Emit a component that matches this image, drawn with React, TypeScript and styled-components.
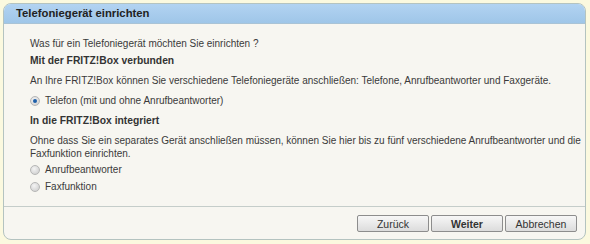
import React, { useState } from 'react';
import styled, { createGlobalStyle } from 'styled-components';

const GlobalStyle = createGlobalStyle`
  html, body {
    margin: 0;
    padding: 0;
    background: #fbf9df;
  }
  body {
    font-family: "Liberation Sans", Arial, sans-serif;
    font-size: 10px;
    color: #3a3a3a;
  }
`;

const Page = styled.div`
  padding: 3px 4px 4px 3px;
`;

const Panel = styled.div`
  border: 1px solid #b4c3c0;
  border-radius: 8px;
  background: #f7f6f1;
  overflow: hidden;
  display: flex;
  flex-direction: column;
  height: 237px;
  box-sizing: border-box;
`;

const Header = styled.div`
  height: 19px;
  line-height: 19px;
  padding-left: 12px;
  background: linear-gradient(#b2d3f2, #9fc6e8);
  border-bottom: 1px solid #a9c3d6;
  font-size: 11.3px;
  font-weight: bold;
  color: #222;
`;

const Body = styled.div`
  flex: 1;
  padding: 13px 4px 0 26px;
`;

const Paragraph = styled.p<{ gap?: number }>`
  margin: 0 0 ${p => p.gap ?? 7}px 0;
  line-height: 13px;
`;

const Heading = styled.h3<{ gap?: number }>`
  margin: 0 0 ${p => p.gap ?? 7}px 0;
  font-size: 10.3px;
  font-weight: bold;
  line-height: 13px;
  color: #333;
`;

const RadioRow = styled.label<{ gap?: number }>`
  display: flex;
  align-items: center;
  gap: 5px;
  height: 13px;
  margin: 0 0 ${p => p.gap ?? 7}px 0;
  cursor: pointer;
`;

const RadioDot = styled.span<{ checked?: boolean }>`
  width: 10px;
  height: 10px;
  border-radius: 50%;
  box-sizing: border-box;
  border: 1px solid #b6b6b6;
  background: radial-gradient(circle at 40% 35%, #f4f4f4, #c9c9c9);
  display: flex;
  align-items: center;
  justify-content: center;
  &::after {
    content: '';
    display: ${p => (p.checked ? 'block' : 'none')};
    width: 4px;
    height: 4px;
    border-radius: 50%;
    background: #1d5fa8;
  }
`;

const Footer = styled.div`
  border-top: 1px solid #c5cdca;
  display: flex;
  justify-content: flex-end;
  gap: 2px;
  padding: 8px 8px 7px 0;
`;

const Button = styled.button<{ primary?: boolean }>`
  width: 72px;
  height: 17px;
  padding: 0;
  font-family: inherit;
  font-size: 10.5px;
  font-weight: ${p => (p.primary ? 'bold' : 'normal')};
  color: #333;
  border: 1px solid #8d8d8d;
  border-radius: 2px;
  background: linear-gradient(#f7f7f7, #dcdcdc);
  cursor: pointer;
`;

export default function App() {
  const [choice, setChoice] = useState('telefon');

  return (
    <Page>
      <GlobalStyle />
      <Panel>
        <Header>Telefoniegerät einrichten</Header>
        <Body>
          <Paragraph gap={4}>Was für ein Telefoniegerät möchten Sie einrichten ?</Paragraph>
          <Heading>Mit der FRITZ!Box verbunden</Heading>
          <Paragraph>
            An Ihre FRITZ!Box können Sie verschiedene Telefoniegeräte anschließen: Telefone, Anrufbeantworter und Faxgeräte.
          </Paragraph>
          <RadioRow onClick={() => setChoice('telefon')}>
            <RadioDot checked={choice === 'telefon'} />
            Telefon (mit und ohne Anrufbeantworter)
          </RadioRow>
          <Heading>In die FRITZ!Box integriert</Heading>
          <Paragraph gap={3}>
            Ohne dass Sie ein separates Gerät anschließen müssen, können Sie hier bis zu fünf verschiedene Anrufbeantworter und die Faxfunktion einrichten.
          </Paragraph>
          <RadioRow gap={4} onClick={() => setChoice('ab')}>
            <RadioDot checked={choice === 'ab'} />
            Anrufbeantworter
          </RadioRow>
          <RadioRow gap={0} onClick={() => setChoice('fax')}>
            <RadioDot checked={choice === 'fax'} />
            Faxfunktion
          </RadioRow>
        </Body>
        <Footer>
          <Button>Zurück</Button>
          <Button primary>Weiter</Button>
          <Button>Abbrechen</Button>
        </Footer>
      </Panel>
    </Page>
  );
}
